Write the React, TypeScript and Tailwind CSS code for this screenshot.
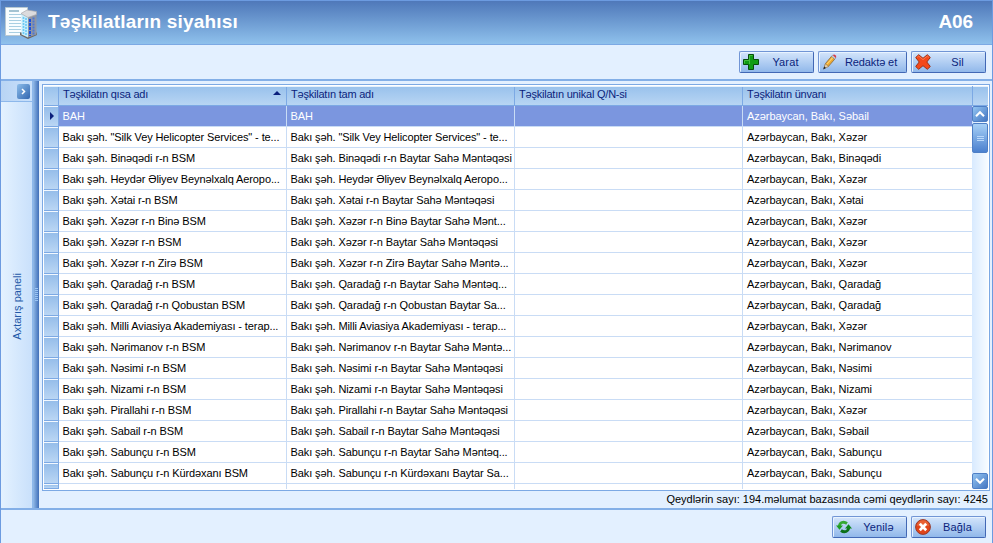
import React from 'react';

type Row = { short: string; full: string; address: string };

const rows: Row[] = [
  { short: 'BAH', full: 'BAH', address: 'Səbail' },
  { short: 'Bakı şəh. "Silk Vey Helicopter Services" - te...', full: 'Bakı şəh. "Silk Vey Helicopter Services" - te...', address: 'Xəzər' },
  { short: 'Bakı şəh. Binəqədi r-n BSM', full: 'Bakı şəh. Binəqədi r-n Baytar Sahə Məntəqəsi', address: 'Binəqədi' },
  { short: 'Bakı şəh. Heydər Əliyev Beynəlxalq Aeropo...', full: 'Bakı şəh. Heydər Əliyev Beynəlxalq Aeropo...', address: 'Xəzər' },
  { short: 'Bakı şəh. Xətai r-n BSM', full: 'Bakı şəh. Xətai r-n Baytar Sahə Məntəqəsi', address: 'Xətai' },
  { short: 'Bakı şəh. Xəzər r-n Binə BSM', full: 'Bakı şəh. Xəzər r-n Binə Baytar Sahə Mənt...', address: 'Xəzər' },
  { short: 'Bakı şəh. Xəzər r-n BSM', full: 'Bakı şəh. Xəzər r-n Baytar Sahə Məntəqəsi', address: 'Xəzər' },
  { short: 'Bakı şəh. Xəzər r-n Zirə BSM', full: 'Bakı şəh. Xəzər r-n Zirə Baytar Sahə Məntə...', address: 'Xəzər' },
  { short: 'Bakı şəh. Qaradağ r-n BSM', full: 'Bakı şəh. Qaradağ r-n Baytar Sahə Məntəq...', address: 'Qaradağ' },
  { short: 'Bakı şəh. Qaradağ r-n Qobustan BSM', full: 'Bakı şəh. Qaradağ r-n Qobustan Baytar Sa...', address: 'Qaradağ' },
  { short: 'Bakı şəh. Milli Aviasiya Akademiyası - terap...', full: 'Bakı şəh. Milli Aviasiya Akademiyası - terap...', address: 'Xəzər' },
  { short: 'Bakı şəh. Nərimanov r-n BSM', full: 'Bakı şəh. Nərimanov r-n Baytar Sahə Məntə...', address: 'Nərimanov' },
  { short: 'Bakı şəh. Nəsimi r-n BSM', full: 'Bakı şəh. Nəsimi r-n Baytar Sahə Məntəqəsi', address: 'Nəsimi' },
  { short: 'Bakı şəh. Nizami r-n BSM', full: 'Bakı şəh. Nizami r-n Baytar Sahə Məntəqəsi', address: 'Nizami' },
  { short: 'Bakı şəh. Pirallahi r-n BSM', full: 'Bakı şəh. Pirallahi r-n Baytar Sahə Məntəqəsi', address: 'Xəzər' },
  { short: 'Bakı şəh. Sabail r-n BSM', full: 'Bakı şəh. Sabail r-n Baytar Sahə Məntəqəsi', address: 'Səbail' },
  { short: 'Bakı şəh. Sabunçu r-n BSM', full: 'Bakı şəh. Sabunçu r-n Baytar Sahə Məntəq...', address: 'Sabunçu' },
  { short: 'Bakı şəh. Sabunçu r-n Kürdəxanı BSM', full: 'Bakı şəh. Sabunçu r-n Kürdəxanı Baytar Sa...', address: 'Sabunçu' },
];

const columns = 'grid grid-cols-[15px_228px_228px_228px_229px] shrink-0';

function DocumentIcon() {
  return (
    <svg width="33" height="34" viewBox="0 0 33 34" aria-hidden="true">
      <path d="M.5 1.500h22v28H.5z" fill="#f8fdff" stroke="#b9c9d2" />
      <path d="M4 5h10" stroke="#a3c3d2" strokeWidth="2" />
      <path d="M4 8.500h13M4 11.500h12M4 14.500h12M4 17.500h12M4 20.500h12M4 23.500h12M4 26.500h12" stroke="#a9cfe2" />
      <path d="M15 29l8 4 9-4v-2.500H15z" fill="#6b6662" />
      <path d="M16.500 8L23 10v21.500l-6.500-3z" fill="#c6edfb" />
      <path d="M23 10l8.500-2v20.500L23 31.500z" fill="#8f96a4" />
      <path d="M16 7.500L22 4l9.500 1.500v3L23 11.500z" fill="#dcdcde" stroke="#a9a9ae" strokeWidth=".7" />
      <path d="M18.500 11v17M21 12v17" stroke="#6cc9f5" strokeWidth="1.600" strokeDasharray="2 1" />
      <path d="M25 13v17" stroke="#194fe0" strokeWidth="2" strokeDasharray="3 1" />
      <path d="M28.500 11.500v17" stroke="#4c76d4" strokeWidth="2" strokeDasharray="2 1" />
    </svg>
  );
}

function PlusIcon() {
  return (
    <svg width="16" height="16" viewBox="0 0 16 16" aria-hidden="true">
      <path d="M5.500.5h5v5h5v5h-5v5h-5v-5h-5v-5h5z" fill="#109c14" stroke="#064f0a" />
      <path d="M6.500 10V1.500h3M1.500 9.500v-3h5" fill="none" stroke="#45bf3e" />
    </svg>
  );
}

function PencilIcon() {
  return (
    <svg width="16" height="16" viewBox="0 0 16 16" aria-hidden="true">
      <path d="M2.500 13.500l1-4L9.500 2.300l3.300 2.800-6.300 7.200z" fill="#eda832" stroke="#85683c" strokeWidth=".8" />
      <path d="M5 10l6-6.700" stroke="#ffd66e" strokeWidth="1.100" />
      <path d="M2 14.500l1.300-4.700 3.200 2.700z" fill="#ecd3ad" stroke="#806b4a" strokeWidth=".5" />
      <path d="M1.200 15.400l.9-3 1.900 1.700z" fill="#222" />
      <path d="M9.500 2.400l1.300-1.300 3.200 2.800-1.200 1.300z" fill="#c9cbd0" stroke="#787d86" strokeWidth=".5" />
      <path d="M10.800 1.100q1.300-1.100 2.600.1t.6 2.700z" fill="#dc3543" />
    </svg>
  );
}

function CrossIcon() {
  return (
    <svg width="16" height="16" viewBox="0 0 16 16" aria-hidden="true">
      <path d="M.7 3.500L3.700.7 8 4.300 12.300.7l3 2.800L11.800 8l3.500 4.500-3 2.800L8 11.700l-4.300 3.600-3-2.800L4.200 8z" fill="#f4481a" stroke="#9c3217" strokeLinejoin="round" />
      <path d="M2.200 3.400l1.500-1.300L8 5.600l4.300-3.500 1.500 1.300" fill="none" stroke="#ff855b" strokeWidth=".8" />
    </svg>
  );
}

function RefreshIcon() {
  return (
    <svg width="16" height="16" viewBox="0 0 16 16" aria-hidden="true">
      <path d="M3.300 7.500C3.500 3.500 7.500 2 11 4.500" fill="none" stroke="#35a932" strokeWidth="2.800" />
      <path d="M0 6.500h7L3.500 10.800z" fill="#1c9c20" />
      <path d="M12.700 8.500c-.2 4-4.200 5.500-7.700 3" fill="none" stroke="#0c7018" strokeWidth="2.800" />
      <path d="M9 9.500h7l-3.500-4.300z" fill="#0c8418" />
    </svg>
  );
}

function CloseIcon() {
  return (
    <svg width="16" height="16" viewBox="0 0 16 16" aria-hidden="true">
      <circle cx="8" cy="8" r="7.400" fill="#e14419" stroke="#963a2c" />
      <path d="M2 7a6 6 0 0112 0" fill="#f27b4e" opacity=".5" />
      <path d="M4.800 4.800l6.400 6.400M11.200 4.800l-6.400 6.400" stroke="#fff" strokeWidth="2.700" />
    </svg>
  );
}

function Button({ icon, label, wide = false }: { icon: React.ReactNode; label: string; wide?: boolean }) {
  return (
    <button
      className={`flex h-[22px] shrink-0 items-center rounded-[2px] border border-[#7195d5] border-r-[#4268b5] border-b-[#4268b5] bg-linear-to-b from-[#d4e5fb] to-[#91b8ea] pl-[3px] shadow-[inset_1px_1px_0_#e8f3ff] ${wide ? 'w-[89px]' : 'w-[75px]'}`}
    >
      {icon}
      <span className={`flex-1 text-center text-[11px] leading-[20px] text-[#0b1f7c] ${wide ? 'pr-[2px] tracking-[-0.1px]' : 'pr-px tracking-[0.15px]'}`}>{label}</span>
    </button>
  );
}

function ScrollButton({ up = false }: { up?: boolean }) {
  return (
    <div className="flex h-4 w-4 shrink-0 items-center justify-center rounded-[2px] border border-[#4e7fc6] bg-linear-to-br from-[#94c5f2] to-[#4577c2]">
      <svg width="10" height="8" viewBox="0 0 10 8" className="shrink-0" aria-hidden="true">
        <path d={up ? 'M1 6.200L5 2.200 9 6.200' : 'M1 1.800L5 5.800 9 1.800'} stroke="#fff" strokeWidth="2" fill="none" />
      </svg>
    </div>
  );
}

function HeaderCell({ label, sorted = false, last = false }: { label: string; sorted?: boolean; last?: boolean }) {
  return (
    <div className={`flex items-start border-[#7ca9e4] pr-1 pl-[4px] tracking-[-0.22px] text-[#0b1f7c] ${last ? '' : 'border-r'}`}>
      <span className="flex-1 leading-[15px]">{label}</span>
      {sorted && (
        <svg className="mt-[4px] mr-px" width="8" height="4" viewBox="0 0 8 4" aria-hidden="true">
          <path d="M0 4L4 0l4 4z" fill="#0b1f7c" />
        </svg>
      )}
    </div>
  );
}

function Indicator({ current = false }: { current?: boolean }) {
  return (
    <div className="flex items-center justify-center border-r border-b border-[#7ca9e4] bg-linear-to-b from-[#94bce9] to-[#bad6f4] shadow-[inset_0_1px_0_#f2f8ff]">
      {current && (
        <svg className="ml-[2px]" width="4" height="8" viewBox="0 0 4 8" aria-hidden="true">
          <path d="M0 0l4 4-4 4z" fill="#0b1f7c" />
        </svg>
      )}
    </div>
  );
}

function DataRow({ row, current }: { row: Row; current: boolean }) {
  const cell = 'overflow-hidden whitespace-pre border-b border-[#c9dcf5] leading-5';
  return (
    <div className={`${columns} h-[21px] ${current ? 'bg-[#7b96df] text-white' : 'bg-white text-black'}`}>
      <Indicator current={current} />
      <div className={`${cell} border-r pl-[3.500px]`}>{row.short}</div>
      <div className={`${cell} border-r pl-[3.500px]`}>{row.full}</div>
      <div className={`${cell} border-r`} />
      <div className={`${cell} pl-[4px] tracking-[-0.04px]`}>Azərbaycan, Bakı, {row.address}</div>
    </div>
  );
}

function Grid() {
  return (
    <div className="flex h-[407px] border border-[#7ca9e4] bg-white p-px">
      <div className="flex min-w-0 flex-1 flex-col overflow-hidden">
        <div className={`${columns} h-5 border-b border-[#7ca9e4] bg-linear-to-b from-[#98c1ec] to-[#b8d5f3] pt-px shadow-[inset_0_1px_0_#e5f1fd]`}>
          <div className="border-r border-[#7ca9e4]" />
          <HeaderCell label="Təşkilatın qısa adı" sorted />
          <HeaderCell label="Təşkilatın tam adı" />
          <HeaderCell label="Təşkilatın unikal Q/N-si" />
          <HeaderCell label="Təşkilatın ünvanı" last />
        </div>
        {rows.map((row, i) => (
          <DataRow key={i} row={row} current={i === 0} />
        ))}
        <div className={`${columns} h-[5px]`}>
          <Indicator />
          <div className="border-r border-[#c9dcf5]" />
          <div className="border-r border-[#c9dcf5]" />
          <div className="border-r border-[#c9dcf5]" />
          <div />
        </div>
      </div>
      <div className="flex w-4 shrink-0 flex-col bg-linear-to-r from-[#d8eaff] to-[#f8fcff]">
        <div className="h-5 shrink-0 border-b border-l border-[#7ca9e4] bg-linear-to-b from-[#98c1ec] to-[#b8d5f3] shadow-[inset_0_1px_0_#e5f1fd]" />
        <ScrollButton up />
        <div className="mt-px flex h-[30px] shrink-0 flex-col items-center justify-center gap-px rounded-[2px] border border-[#4e7fc6] bg-linear-to-b from-[#a7d0f6] to-[#4b80ce]">
          <i className="h-px w-[7px] bg-[#b9d8fa]" />
          <i className="h-px w-[7px] bg-[#b9d8fa]" />
          <i className="h-px w-[7px] bg-[#b9d8fa]" />
        </div>
        <div className="flex-1" />
        <ScrollButton />
      </div>
    </div>
  );
}

export default function App() {
  return (
    <div className="flex h-[543px] w-[993px] flex-col overflow-hidden border-t border-r border-l border-[#6c9be0] bg-[#e3f0ff] font-['Liberation_Sans',Arial,sans-serif] text-[11px]">
      <header className="flex h-[44px] shrink-0 items-center border-b border-[#7ca9e4] bg-linear-to-b from-[#4f78b9] to-[#8fc1ec] pr-[19px] pl-1 font-bold text-white">
        <DocumentIcon />
        <h1 className="ml-[10px] flex-1 text-[19px] tracking-[0.19px]">Təşkilatların siyahısı</h1>
        <span className="text-[19px] tracking-[-0.1px]">A06</span>
      </header>
      <div className="flex h-[36px] shrink-0 justify-end gap-1 border-b-2 border-[#83afe7] pt-[6px] pr-[6px]">
        <Button icon={<PlusIcon />} label="Yarat" />
        <Button icon={<PencilIcon />} label="Redaktə et" wide />
        <Button icon={<CrossIcon />} label="Sil" />
      </div>
      <main className="flex h-[429px] shrink-0 border-b-2 border-[#83afe7]">
        <aside className="flex w-[32px] shrink-0 flex-col border-r border-[#8db8eb] bg-linear-to-r from-[#e4f2ff] to-[#c9e0fb]">
          <div className="flex h-[21px] shrink-0 justify-end border-b border-[#8db8eb] bg-linear-to-r from-[#b8d4f4] to-[#c9e0fb] pt-[3px] pr-[2px]">
            <div className="flex h-[15px] w-[13px] items-center justify-center rounded-[2px] bg-linear-to-br from-[#8dbdea] to-[#3266af]">
              <svg width="5" height="7" viewBox="0 0 5 7" aria-hidden="true">
                <path d="M1 1l2.500 2.500L1 6" stroke="#fff" strokeWidth="1.500" fill="none" />
              </svg>
            </div>
          </div>
          <div className="flex flex-1 items-center justify-center pt-[2px] pl-px">
            <span className="rotate-180 whitespace-nowrap text-[11px] text-[#2459a8] [writing-mode:vertical-rl]">Axtarış paneli</span>
          </div>
        </aside>
        <div className="flex w-[6px] shrink-0 flex-col items-center justify-center gap-px bg-linear-to-r from-[#94bce9] to-[#406fb9]">
          {Array.from({ length: 7 }, (_, i) => (
            <i key={i} className="h-px w-[3px] bg-[#9ac4f3]" />
          ))}
        </div>
        <section className="flex min-w-0 flex-1 flex-col pt-[3px] pr-[2px] pl-[3px] tracking-[-0.1px]">
          <Grid />
          <div className="pr-[2px] text-right leading-[17px] tracking-[0px] whitespace-nowrap">Qeydlərin sayı: 194.məlumat bazasında cəmi qeydlərin sayı: 4245</div>
        </section>
      </main>
      <footer className="flex flex-1 justify-end gap-1 pt-[6px] pr-[6px]">
        <Button icon={<RefreshIcon />} label="Yenilə" />
        <Button icon={<CloseIcon />} label="Bağla" />
      </footer>
    </div>
  );
}
